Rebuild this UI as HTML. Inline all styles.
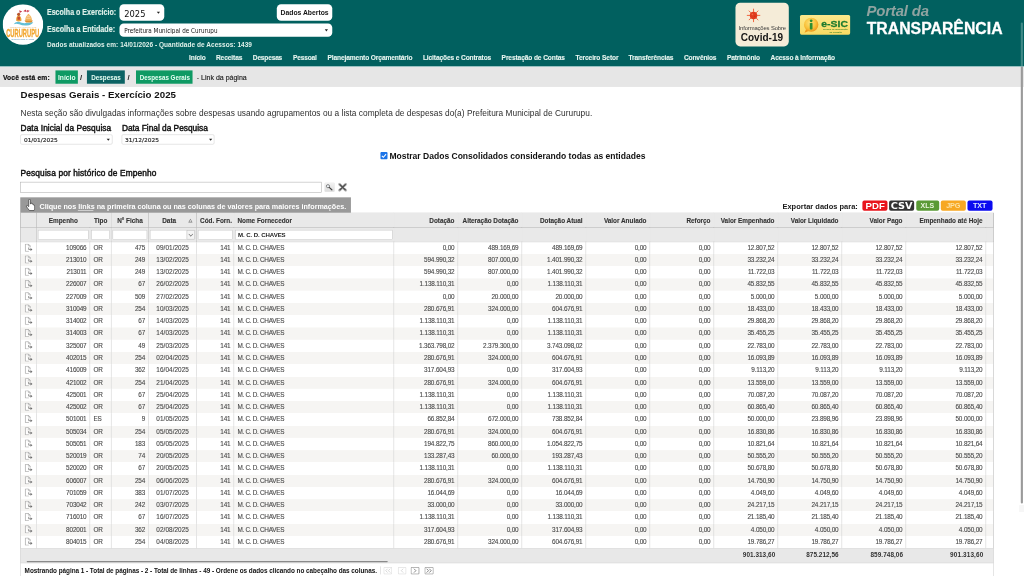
<!DOCTYPE html>
<html lang="pt-BR"><head><meta charset="utf-8"><title>Portal da Transparência - Despesas Gerais</title>
<style>
html,body{margin:0;padding:0;background:#fff;overflow:hidden;width:1024px;height:576px}
#w{position:absolute;left:0;top:0;width:1920px;height:1080px;transform:scale(.5333333);filter:contrast(1);transform-origin:0 0;background:#fff;overflow:hidden;font-family:"Liberation Sans",sans-serif}
.b{position:absolute;display:block}
.t{position:absolute;white-space:pre;line-height:1}
.arr{width:0;height:0;border-style:solid;border-color:#222 transparent transparent transparent}
table.g{position:absolute;border-collapse:collapse;table-layout:fixed;font:12px/1 "Liberation Sans",sans-serif;color:#484848;border:1px solid #cfcfcf;border-bottom:0}
table.g td,table.g th{padding:0 6px;overflow:hidden;white-space:nowrap;border-left:1px solid #cdcdcd;border-right:1px solid #cdcdcd;box-sizing:border-box}
table.g tr.h th{height:27px;background:#e9e9e9;color:#333;font-weight:700;font-size:12px;border-bottom:1px solid #b4b4b4;border-left-color:#b0b0b0;border-right-color:#b0b0b0;position:relative;letter-spacing:-0.03px;-webkit-text-stroke:0.2px #333;padding-top:2px}
table.g tr.f td{height:27px;background:#e9e9e9;border-bottom:1px solid #bdbdbd;padding:0 2px;position:relative;border-left-color:#bdbdbd;border-right-color:#bdbdbd}
table.g tr.f u{display:block;height:19px;margin-top:1px;background:#fff;border:1px solid #c4c4c4;box-sizing:border-box;text-decoration:none}
table.g tr.f u.dd{margin-right:0}
table.g tr.f b.ddb{position:absolute;right:3px;top:5px;width:15px;height:17px;border:1px solid #bdbdbd;background:#f4f4f4;box-sizing:border-box}
table.g tr.f b.ddb:after{content:"";position:absolute;left:3.5px;top:3.5px;width:4.5px;height:4.5px;border-right:1.3px solid #666;border-bottom:1.3px solid #666;transform:rotate(45deg)}
table.g tr.f u.fn{font-weight:700;color:#222;font-size:11.4px;line-height:17px;padding-left:4px;letter-spacing:-0.15px}
table.g tr.d td{height:23px;line-height:23px;letter-spacing:-0.3px;-webkit-text-stroke:0.2px #484848}
table.g tr.a td{background:#f6f5f3}
table.g tr.d1 td{height:22.5px;line-height:22.5px}
table.g tr.ft td{height:28px;background:#e8e8e8;font-weight:700;color:#333;border-left-color:#e8e8e8;border-right-color:#e8e8e8;border-top:1px solid #d4d4d4;vertical-align:top;padding-top:5px}
table.g tr.d td.dt{letter-spacing:.12px}
table.g tr.d td.nm{letter-spacing:-.55px}
table.g .r{text-align:right}.g .l{text-align:left}.g .c{text-align:center}
table.g td.i{padding:0;text-align:center;line-height:0}
table.g td.i svg{vertical-align:middle;position:relative;top:-1px;left:.6px}
i.srt{position:absolute;right:7px;top:10px;width:0;height:0;border-style:solid;border-width:0 4px 7px 4px;border-color:transparent transparent #777 transparent}
i.srt:after{content:"";position:absolute;left:-2.4px;top:2.2px;border-style:solid;border-width:0 2.4px 4.2px 2.4px;border-color:transparent transparent #e9e9e9 transparent}
.pg{border:1px solid;box-sizing:border-box;border-radius:2px;font:700 15px/11px "Liberation Sans",sans-serif;text-align:center;background:#fff}
</style></head><body><div id="w">
<div class="b" style="left:0.00px;top:0.00px;width:1920.00px;height:124.50px;background:#01605f;"></div>
<div class="b" style="left:0.00px;top:124.50px;width:1920.00px;height:38.62px;background:#e6e6e6;"></div>
<div class="b" style="left:0.00px;top:124.50px;width:1920.00px;height:1.88px;background:linear-gradient(#bfe6e4,#e6e6e6);"></div>
<div class="b" style="left:224.06px;top:8.06px;width:84.38px;height:30.56px;background:#fff;border-radius:8px;"></div>
<div class="b arr" style="left:293.62px;top:21.75px;border-width:4px 3.2px 0 3.2px;"></div>
<div class="b" style="left:224.06px;top:44.44px;width:398.81px;height:24.56px;background:#fff;border-radius:8px;"></div>
<div class="b arr" style="left:609.38px;top:55.12px;border-width:4px 3.2px 0 3.2px;"></div>
<div class="b" style="left:519.19px;top:7.69px;width:103.69px;height:31.50px;background:#fff;border-radius:8px;"></div>
<div class="b" style="left:1378.50px;top:5.25px;width:100.87px;height:81.75px;background:#f5ecd8;border-radius:9px;"></div>
<svg class="b" style="left:1398.75px;top:15.00px" width="27.75" height="27.75" viewBox="-17 -17 34 34">
<g stroke="#f0603a" stroke-width="2.2" stroke-linecap="round">
<line x1="0" y1="-9" x2="0" y2="-14.5"/><line x1="0" y1="9" x2="0" y2="14.5"/><line x1="-9" y1="0" x2="-14.5" y2="0"/><line x1="9" y1="0" x2="14.5" y2="0"/>
<line x1="6.4" y1="6.4" x2="10.2" y2="10.2"/><line x1="-6.4" y1="6.4" x2="-10.2" y2="10.2"/><line x1="6.4" y1="-6.4" x2="10.2" y2="-10.2"/><line x1="-6.4" y1="-6.4" x2="-10.2" y2="-10.2"/>
</g><circle r="8.6" fill="#e03a1e"/><circle cx="-2.5" cy="-2.5" r="2" fill="#ee6a44"/><circle cx="3" cy="2" r="1.6" fill="#c92c14"/></svg>
<div class="b" style="left:1500.19px;top:28.12px;width:93.37px;height:37.31px;background:linear-gradient(#fce88c,#f9da62);border-radius:3px;"></div>
<svg class="b" style="left:1504.69px;top:30.56px" width="31.88" height="32.62" viewBox="0 0 34 35">
<defs><radialGradient id="eg" cx=".42" cy=".38" r=".62"><stop offset="0" stop-color="#fde27a"/><stop offset=".62" stop-color="#f9c33c"/><stop offset="1" stop-color="#ee9a1c"/></radialGradient></defs>
<path d="M7 25 L3.500 32.500 L13 28.500Z" fill="#ee9a1c"/><ellipse cx="17" cy="16.500" rx="14.500" ry="14.200" fill="url(#eg)"/>
<circle cx="17" cy="8.600" r="2.800" fill="#2c8f33"/><rect x="14.300" y="12.800" width="5.400" height="13.400" rx="1.400" fill="#2c8f33"/></svg>
<svg class="b" style="left:4.69px;top:8.44px" width="76.12" height="76.12" viewBox="0 0 81 81">
<circle cx="40.5" cy="40.5" r="40.5" fill="#fff"/>
<path d="M22 40 q3 -6 10 -5 q9 4 17 2 q7 -2 12 -1 q-3 6 -13 6.5 q-9 .5 -15 -2.5 q-6 -2 -11 0z" fill="#63bfd6"/>
<path d="M27 33 q-1 -8 5 -12 q6 4 5.5 12 q-5 3 -10.5 0z" fill="#e9a23b"/><circle cx="32" cy="20" r="3.2" fill="#b8562c"/>
<path d="M29.500 25 h5 v6 h-5z" fill="#c9472d"/>
<path d="M45 33 q0 -9 6.500 -14 q7 5 7 14z" fill="#f2b155"/><path d="M43.500 32.500 h17 l-3 4 h-11z" fill="#de8f2f"/>
<path d="M47 27 h9 v1.500 h-9z M48 23 h7 v1.200 h-7z" fill="#fff" opacity=".7"/>
<path d="M33 12 l6 2.500 l-5 3z M41 14 l5 -3.500 l2 5z M48 11.500 l6 1.500 l-4.500 3.500z" fill="#c93a4a"/>
<text x="7" y="65" font-family="Liberation Sans, sans-serif" font-weight="700" font-size="23.5" fill="#f2a62e" textLength="66" lengthAdjust="spacingAndGlyphs" stroke="#f2a62e" stroke-width=".6">CURURUPU</text>
<text x="14" y="47.300" font-family="Liberation Sans, sans-serif" font-size="3.400" fill="#e2b57a" textLength="53" lengthAdjust="spacingAndGlyphs">PREFEITURA MUNICIPAL DE</text>
<text x="17" y="71.500" font-family="Liberation Serif, serif" font-style="italic" font-size="5.200" fill="#5c93b8" textLength="46" lengthAdjust="spacingAndGlyphs">reconstruindo a cidade</text>
</svg>
<div class="b" style="left:103.50px;top:131.81px;width:42.37px;height:25.31px;background:#0f9a64;"></div>
<div class="b" style="left:163.12px;top:131.81px;width:70.88px;height:25.31px;background:#0c6364;"></div>
<div class="b" style="left:255.00px;top:131.81px;width:105.56px;height:25.31px;background:#0f9a64;"></div>
<div class="b" style="left:38.25px;top:251.62px;width:172.69px;height:19.88px;background:#fff;border:1px solid #d0d0d0;border-radius:3px;box-sizing:border-box;"></div>
<div class="b" style="left:228.00px;top:251.62px;width:174.19px;height:19.88px;background:#fff;border:1px solid #d0d0d0;border-radius:3px;box-sizing:border-box;"></div>
<div class="b arr" style="left:200.44px;top:260.44px;border-width:4.4px 3.6px 0 3.6px;"></div>
<div class="b arr" style="left:391.50px;top:260.44px;border-width:4.4px 3.6px 0 3.6px;"></div>
<svg class="b" style="left:712.88px;top:285.38px" width="13.88" height="13.88" viewBox="0 0 14 14"><rect width="14" height="14" rx="2.2" fill="#1a73e8"/><path d="M3 7.2 L5.8 10 L11 4.2" stroke="#fff" stroke-width="2" fill="none"/></svg>
<div class="b" style="left:38.25px;top:341.25px;width:564.75px;height:19.69px;background:#fff;border:1.5px solid #adadad;box-sizing:border-box;"></div>
<svg class="b" style="left:607.88px;top:342.19px" width="19.69" height="18.00" viewBox="0 0 21 19.2"><defs><linearGradient id="sg" x1="0" y1="0" x2="0" y2="1"><stop offset="0" stop-color="#f3f3f3"/><stop offset="1" stop-color="#dcdcdc"/></linearGradient></defs><rect x="0.3" y="0.3" width="20.400" height="18.600" rx="2.500" fill="url(#sg)" stroke="#e2e2e2" stroke-width=".6"/><circle cx="7.400" cy="7.600" r="3.200" fill="#eef3f7" stroke="#666" stroke-width="1.500"/><path d="M9.800 10 L15.200 14.800" stroke="#444" stroke-width="2.400" stroke-linecap="round"/></svg>
<svg class="b" style="left:633.38px;top:342.19px" width="18.75" height="18.00" viewBox="0 0 20 19.2"><path d="M3.800 3.600 L16.200 15.800 M16.200 3.600 L3.800 15.800" stroke="#b9b9b9" stroke-width="5.400" stroke-linecap="round"/><path d="M3.800 3.600 L16.200 15.800 M16.200 3.600 L3.800 15.800" stroke="#505050" stroke-width="2.600"/></svg>
<div class="b" style="left:37.50px;top:370.12px;width:620.62px;height:29.44px;background:#999;"></div>
<svg class="b" style="left:48.00px;top:373.12px" width="17.62" height="22.50" viewBox="0 0 18 23"><path d="M6 2.2 q0 -1.6 1.6 -1.6 q1.6 0 1.6 1.6 v7.2 l1 .1 v-1.4 q2.6 -.6 2.6 1.2 v.6 q2.4 -.4 2.4 1.4 v.5 q2.2 -.2 2.2 1.8 v4.2 q0 2.5 -1.4 4.4 h-8.6 q-2.6 -3.2 -5.6 -7.2 q-1.2 -2 1 -2.4 q1.4 0 3.2 2.2z" fill="#fff" stroke="#333" stroke-width="1.3"/></svg>
<div class="b" style="left:146.06px;top:393.75px;width:29.44px;height:1.12px;background:#fff;"></div>
<div class="b" style="left:1617.00px;top:375.56px;width:47.25px;height:19.69px;background:#e8151d;border-radius:3.5px;"></div>
<div class="b" style="left:1667.06px;top:375.56px;width:47.25px;height:19.69px;background:#333;border-radius:3.5px;"></div>
<div class="b" style="left:1717.50px;top:375.56px;width:43.50px;height:19.69px;background:#5a9a36;border-radius:3.5px;"></div>
<div class="b" style="left:1763.81px;top:375.56px;width:47.25px;height:19.69px;background:#f7a823;border-radius:3.5px;"></div>
<div class="b" style="left:1813.88px;top:375.56px;width:47.25px;height:19.69px;background:#0b0bf0;border-radius:3.5px;"></div>
<div class="b" style="left:38.01px;top:399.00px;width:1824.99px;height:54.00px;background:#e9e9e9;"></div>
<div class="b" style="left:38.01px;top:1027.88px;width:1824.99px;height:28.50px;background:#e8e8e8;border-top:1px solid #d6d6d6;border-bottom:1px solid #d9d9d9;box-sizing:border-box;"></div>
<div class="b" style="left:38.01px;top:399.00px;width:0.99px;height:681.00px;background:#cfcfcf;"></div>
<div class="b" style="left:1862.06px;top:399.00px;width:0.99px;height:681.00px;background:#cfcfcf;"></div>
<table class="g" style="left:38.2px;top:398.5px;width:1824.2px"><colgroup><col style="width:30.0px"><col style="width:99.99999999999999px"><col style="width:40.0px"><col style="width:70.0px"><col style="width:90.0px"><col style="width:70.0px"><col style="width:300.00000000000006px"><col style="width:120.0px"><col style="width:120.0px"><col style="width:120.0px"><col style="width:120.0px"><col style="width:120.0px"><col style="width:120.0px"><col style="width:120.0px"><col style="width:120.0px"><col style="width:150.0px"><col style="width:14.200000000000045px"></colgroup>
<tr class="h"><th class="c"></th><th class="c">Empenho</th><th class="c">Tipo</th><th class="c">N° Ficha</th><th class="c" style="padding-right:19px">Data<i class="srt"></i></th><th class="c">Cód. Forn.</th><th class="l">Nome Fornecedor</th><th class="r">Dotação</th><th class="r">Alteração Dotação</th><th class="r">Dotação Atual</th><th class="r">Valor Anulado</th><th class="r">Reforço</th><th class="r">Valor Empenhado</th><th class="r">Valor Liquidado</th><th class="r">Valor Pago</th><th class="r">Empenhado até Hoje</th><th class="c"></th></tr>
<tr class="f"><td></td><td><u></u></td><td><u></u></td><td><u></u></td><td><u class="dd"></u><b class="ddb"></b></td><td><u></u></td><td><u class="fn">M. C. D. CHAVES</u></td><td></td><td></td><td></td><td></td><td></td><td></td><td></td><td></td><td></td><td></td></tr>
<tr class="d d1"><td class="i"><svg width="16" height="15" viewBox="0 0 16 15"><path d="M1.600 .6 h5.600 l3.400 3.400 v2.800 M1.600 .6 v13.800 h6.600" fill="#fff" stroke="#8a8a8a" stroke-width="1.100"/><path d="M7.200 .6 v3.400 h3.400" fill="none" stroke="#9a9a9a" stroke-width="1"/><path d="M7.800 7 v3.800 h4" fill="none" stroke="#6a6a6a" stroke-width="1.300"/><path d="M11.200 7.900 l3.600 2.900 l-3.600 2.900z" fill="#6a6a6a"/></svg></td><td class="r">109066</td><td class="l">OR</td><td class="r">475</td><td class="c dt">09/01/2025</td><td class="r">141</td><td class="l nm">M. C. D. CHAVES</td><td class="r">0,00</td><td class="r">489.169,69</td><td class="r">489.169,69</td><td class="r">0,00</td><td class="r">0,00</td><td class="r">12.807,52</td><td class="r">12.807,52</td><td class="r">12.807,52</td><td class="r">12.807,52</td><td class=""></td></tr>
<tr class="d a"><td class="i"><svg width="16" height="15" viewBox="0 0 16 15"><path d="M1.600 .6 h5.600 l3.400 3.400 v2.800 M1.600 .6 v13.800 h6.600" fill="#fff" stroke="#8a8a8a" stroke-width="1.100"/><path d="M7.200 .6 v3.400 h3.400" fill="none" stroke="#9a9a9a" stroke-width="1"/><path d="M7.800 7 v3.800 h4" fill="none" stroke="#6a6a6a" stroke-width="1.300"/><path d="M11.200 7.900 l3.600 2.900 l-3.600 2.900z" fill="#6a6a6a"/></svg></td><td class="r">213010</td><td class="l">OR</td><td class="r">249</td><td class="c dt">13/02/2025</td><td class="r">141</td><td class="l nm">M. C. D. CHAVES</td><td class="r">594.990,32</td><td class="r">807.000,00</td><td class="r">1.401.990,32</td><td class="r">0,00</td><td class="r">0,00</td><td class="r">33.232,24</td><td class="r">33.232,24</td><td class="r">33.232,24</td><td class="r">33.232,24</td><td class=""></td></tr>
<tr class="d"><td class="i"><svg width="16" height="15" viewBox="0 0 16 15"><path d="M1.600 .6 h5.600 l3.400 3.400 v2.800 M1.600 .6 v13.800 h6.600" fill="#fff" stroke="#8a8a8a" stroke-width="1.100"/><path d="M7.200 .6 v3.400 h3.400" fill="none" stroke="#9a9a9a" stroke-width="1"/><path d="M7.800 7 v3.800 h4" fill="none" stroke="#6a6a6a" stroke-width="1.300"/><path d="M11.200 7.900 l3.600 2.900 l-3.600 2.900z" fill="#6a6a6a"/></svg></td><td class="r">213011</td><td class="l">OR</td><td class="r">249</td><td class="c dt">13/02/2025</td><td class="r">141</td><td class="l nm">M. C. D. CHAVES</td><td class="r">594.990,32</td><td class="r">807.000,00</td><td class="r">1.401.990,32</td><td class="r">0,00</td><td class="r">0,00</td><td class="r">11.722,03</td><td class="r">11.722,03</td><td class="r">11.722,03</td><td class="r">11.722,03</td><td class=""></td></tr>
<tr class="d a"><td class="i"><svg width="16" height="15" viewBox="0 0 16 15"><path d="M1.600 .6 h5.600 l3.400 3.400 v2.800 M1.600 .6 v13.800 h6.600" fill="#fff" stroke="#8a8a8a" stroke-width="1.100"/><path d="M7.200 .6 v3.400 h3.400" fill="none" stroke="#9a9a9a" stroke-width="1"/><path d="M7.800 7 v3.800 h4" fill="none" stroke="#6a6a6a" stroke-width="1.300"/><path d="M11.200 7.900 l3.600 2.900 l-3.600 2.900z" fill="#6a6a6a"/></svg></td><td class="r">226007</td><td class="l">OR</td><td class="r">67</td><td class="c dt">26/02/2025</td><td class="r">141</td><td class="l nm">M. C. D. CHAVES</td><td class="r">1.138.110,31</td><td class="r">0,00</td><td class="r">1.138.110,31</td><td class="r">0,00</td><td class="r">0,00</td><td class="r">45.832,55</td><td class="r">45.832,55</td><td class="r">45.832,55</td><td class="r">45.832,55</td><td class=""></td></tr>
<tr class="d"><td class="i"><svg width="16" height="15" viewBox="0 0 16 15"><path d="M1.600 .6 h5.600 l3.400 3.400 v2.800 M1.600 .6 v13.800 h6.600" fill="#fff" stroke="#8a8a8a" stroke-width="1.100"/><path d="M7.200 .6 v3.400 h3.400" fill="none" stroke="#9a9a9a" stroke-width="1"/><path d="M7.800 7 v3.800 h4" fill="none" stroke="#6a6a6a" stroke-width="1.300"/><path d="M11.200 7.900 l3.600 2.900 l-3.600 2.900z" fill="#6a6a6a"/></svg></td><td class="r">227009</td><td class="l">OR</td><td class="r">509</td><td class="c dt">27/02/2025</td><td class="r">141</td><td class="l nm">M. C. D. CHAVES</td><td class="r">0,00</td><td class="r">20.000,00</td><td class="r">20.000,00</td><td class="r">0,00</td><td class="r">0,00</td><td class="r">5.000,00</td><td class="r">5.000,00</td><td class="r">5.000,00</td><td class="r">5.000,00</td><td class=""></td></tr>
<tr class="d a"><td class="i"><svg width="16" height="15" viewBox="0 0 16 15"><path d="M1.600 .6 h5.600 l3.400 3.400 v2.800 M1.600 .6 v13.800 h6.600" fill="#fff" stroke="#8a8a8a" stroke-width="1.100"/><path d="M7.200 .6 v3.400 h3.400" fill="none" stroke="#9a9a9a" stroke-width="1"/><path d="M7.800 7 v3.800 h4" fill="none" stroke="#6a6a6a" stroke-width="1.300"/><path d="M11.200 7.900 l3.600 2.900 l-3.600 2.900z" fill="#6a6a6a"/></svg></td><td class="r">310049</td><td class="l">OR</td><td class="r">254</td><td class="c dt">10/03/2025</td><td class="r">141</td><td class="l nm">M. C. D. CHAVES</td><td class="r">280.676,91</td><td class="r">324.000,00</td><td class="r">604.676,91</td><td class="r">0,00</td><td class="r">0,00</td><td class="r">18.433,00</td><td class="r">18.433,00</td><td class="r">18.433,00</td><td class="r">18.433,00</td><td class=""></td></tr>
<tr class="d"><td class="i"><svg width="16" height="15" viewBox="0 0 16 15"><path d="M1.600 .6 h5.600 l3.400 3.400 v2.800 M1.600 .6 v13.800 h6.600" fill="#fff" stroke="#8a8a8a" stroke-width="1.100"/><path d="M7.200 .6 v3.400 h3.400" fill="none" stroke="#9a9a9a" stroke-width="1"/><path d="M7.800 7 v3.800 h4" fill="none" stroke="#6a6a6a" stroke-width="1.300"/><path d="M11.200 7.900 l3.600 2.900 l-3.600 2.900z" fill="#6a6a6a"/></svg></td><td class="r">314002</td><td class="l">OR</td><td class="r">67</td><td class="c dt">14/03/2025</td><td class="r">141</td><td class="l nm">M. C. D. CHAVES</td><td class="r">1.138.110,31</td><td class="r">0,00</td><td class="r">1.138.110,31</td><td class="r">0,00</td><td class="r">0,00</td><td class="r">29.868,20</td><td class="r">29.868,20</td><td class="r">29.868,20</td><td class="r">29.868,20</td><td class=""></td></tr>
<tr class="d a"><td class="i"><svg width="16" height="15" viewBox="0 0 16 15"><path d="M1.600 .6 h5.600 l3.400 3.400 v2.800 M1.600 .6 v13.800 h6.600" fill="#fff" stroke="#8a8a8a" stroke-width="1.100"/><path d="M7.200 .6 v3.400 h3.400" fill="none" stroke="#9a9a9a" stroke-width="1"/><path d="M7.800 7 v3.800 h4" fill="none" stroke="#6a6a6a" stroke-width="1.300"/><path d="M11.200 7.900 l3.600 2.900 l-3.600 2.900z" fill="#6a6a6a"/></svg></td><td class="r">314003</td><td class="l">OR</td><td class="r">67</td><td class="c dt">14/03/2025</td><td class="r">141</td><td class="l nm">M. C. D. CHAVES</td><td class="r">1.138.110,31</td><td class="r">0,00</td><td class="r">1.138.110,31</td><td class="r">0,00</td><td class="r">0,00</td><td class="r">35.455,25</td><td class="r">35.455,25</td><td class="r">35.455,25</td><td class="r">35.455,25</td><td class=""></td></tr>
<tr class="d"><td class="i"><svg width="16" height="15" viewBox="0 0 16 15"><path d="M1.600 .6 h5.600 l3.400 3.400 v2.800 M1.600 .6 v13.800 h6.600" fill="#fff" stroke="#8a8a8a" stroke-width="1.100"/><path d="M7.200 .6 v3.400 h3.400" fill="none" stroke="#9a9a9a" stroke-width="1"/><path d="M7.800 7 v3.800 h4" fill="none" stroke="#6a6a6a" stroke-width="1.300"/><path d="M11.200 7.900 l3.600 2.900 l-3.600 2.900z" fill="#6a6a6a"/></svg></td><td class="r">325007</td><td class="l">OR</td><td class="r">49</td><td class="c dt">25/03/2025</td><td class="r">141</td><td class="l nm">M. C. D. CHAVES</td><td class="r">1.363.798,02</td><td class="r">2.379.300,00</td><td class="r">3.743.098,02</td><td class="r">0,00</td><td class="r">0,00</td><td class="r">22.783,00</td><td class="r">22.783,00</td><td class="r">22.783,00</td><td class="r">22.783,00</td><td class=""></td></tr>
<tr class="d a"><td class="i"><svg width="16" height="15" viewBox="0 0 16 15"><path d="M1.600 .6 h5.600 l3.400 3.400 v2.800 M1.600 .6 v13.800 h6.600" fill="#fff" stroke="#8a8a8a" stroke-width="1.100"/><path d="M7.200 .6 v3.400 h3.400" fill="none" stroke="#9a9a9a" stroke-width="1"/><path d="M7.800 7 v3.800 h4" fill="none" stroke="#6a6a6a" stroke-width="1.300"/><path d="M11.200 7.900 l3.600 2.900 l-3.600 2.900z" fill="#6a6a6a"/></svg></td><td class="r">402015</td><td class="l">OR</td><td class="r">254</td><td class="c dt">02/04/2025</td><td class="r">141</td><td class="l nm">M. C. D. CHAVES</td><td class="r">280.676,91</td><td class="r">324.000,00</td><td class="r">604.676,91</td><td class="r">0,00</td><td class="r">0,00</td><td class="r">16.093,89</td><td class="r">16.093,89</td><td class="r">16.093,89</td><td class="r">16.093,89</td><td class=""></td></tr>
<tr class="d"><td class="i"><svg width="16" height="15" viewBox="0 0 16 15"><path d="M1.600 .6 h5.600 l3.400 3.400 v2.800 M1.600 .6 v13.800 h6.600" fill="#fff" stroke="#8a8a8a" stroke-width="1.100"/><path d="M7.200 .6 v3.400 h3.400" fill="none" stroke="#9a9a9a" stroke-width="1"/><path d="M7.800 7 v3.800 h4" fill="none" stroke="#6a6a6a" stroke-width="1.300"/><path d="M11.200 7.900 l3.600 2.900 l-3.600 2.900z" fill="#6a6a6a"/></svg></td><td class="r">416009</td><td class="l">OR</td><td class="r">362</td><td class="c dt">16/04/2025</td><td class="r">141</td><td class="l nm">M. C. D. CHAVES</td><td class="r">317.604,93</td><td class="r">0,00</td><td class="r">317.604,93</td><td class="r">0,00</td><td class="r">0,00</td><td class="r">9.113,20</td><td class="r">9.113,20</td><td class="r">9.113,20</td><td class="r">9.113,20</td><td class=""></td></tr>
<tr class="d a"><td class="i"><svg width="16" height="15" viewBox="0 0 16 15"><path d="M1.600 .6 h5.600 l3.400 3.400 v2.800 M1.600 .6 v13.800 h6.600" fill="#fff" stroke="#8a8a8a" stroke-width="1.100"/><path d="M7.200 .6 v3.400 h3.400" fill="none" stroke="#9a9a9a" stroke-width="1"/><path d="M7.800 7 v3.800 h4" fill="none" stroke="#6a6a6a" stroke-width="1.300"/><path d="M11.200 7.900 l3.600 2.900 l-3.600 2.900z" fill="#6a6a6a"/></svg></td><td class="r">421002</td><td class="l">OR</td><td class="r">254</td><td class="c dt">21/04/2025</td><td class="r">141</td><td class="l nm">M. C. D. CHAVES</td><td class="r">280.676,91</td><td class="r">324.000,00</td><td class="r">604.676,91</td><td class="r">0,00</td><td class="r">0,00</td><td class="r">13.559,00</td><td class="r">13.559,00</td><td class="r">13.559,00</td><td class="r">13.559,00</td><td class=""></td></tr>
<tr class="d"><td class="i"><svg width="16" height="15" viewBox="0 0 16 15"><path d="M1.600 .6 h5.600 l3.400 3.400 v2.800 M1.600 .6 v13.800 h6.600" fill="#fff" stroke="#8a8a8a" stroke-width="1.100"/><path d="M7.200 .6 v3.400 h3.400" fill="none" stroke="#9a9a9a" stroke-width="1"/><path d="M7.800 7 v3.800 h4" fill="none" stroke="#6a6a6a" stroke-width="1.300"/><path d="M11.200 7.900 l3.600 2.900 l-3.600 2.900z" fill="#6a6a6a"/></svg></td><td class="r">425001</td><td class="l">OR</td><td class="r">67</td><td class="c dt">25/04/2025</td><td class="r">141</td><td class="l nm">M. C. D. CHAVES</td><td class="r">1.138.110,31</td><td class="r">0,00</td><td class="r">1.138.110,31</td><td class="r">0,00</td><td class="r">0,00</td><td class="r">70.087,20</td><td class="r">70.087,20</td><td class="r">70.087,20</td><td class="r">70.087,20</td><td class=""></td></tr>
<tr class="d a"><td class="i"><svg width="16" height="15" viewBox="0 0 16 15"><path d="M1.600 .6 h5.600 l3.400 3.400 v2.800 M1.600 .6 v13.800 h6.600" fill="#fff" stroke="#8a8a8a" stroke-width="1.100"/><path d="M7.200 .6 v3.400 h3.400" fill="none" stroke="#9a9a9a" stroke-width="1"/><path d="M7.800 7 v3.800 h4" fill="none" stroke="#6a6a6a" stroke-width="1.300"/><path d="M11.200 7.900 l3.600 2.900 l-3.600 2.900z" fill="#6a6a6a"/></svg></td><td class="r">425002</td><td class="l">OR</td><td class="r">67</td><td class="c dt">25/04/2025</td><td class="r">141</td><td class="l nm">M. C. D. CHAVES</td><td class="r">1.138.110,31</td><td class="r">0,00</td><td class="r">1.138.110,31</td><td class="r">0,00</td><td class="r">0,00</td><td class="r">60.865,40</td><td class="r">60.865,40</td><td class="r">60.865,40</td><td class="r">60.865,40</td><td class=""></td></tr>
<tr class="d"><td class="i"><svg width="16" height="15" viewBox="0 0 16 15"><path d="M1.600 .6 h5.600 l3.400 3.400 v2.800 M1.600 .6 v13.800 h6.600" fill="#fff" stroke="#8a8a8a" stroke-width="1.100"/><path d="M7.200 .6 v3.400 h3.400" fill="none" stroke="#9a9a9a" stroke-width="1"/><path d="M7.800 7 v3.800 h4" fill="none" stroke="#6a6a6a" stroke-width="1.300"/><path d="M11.200 7.900 l3.600 2.900 l-3.600 2.900z" fill="#6a6a6a"/></svg></td><td class="r">501001</td><td class="l">ES</td><td class="r">9</td><td class="c dt">01/05/2025</td><td class="r">141</td><td class="l nm">M. C. D. CHAVES</td><td class="r">66.852,84</td><td class="r">672.000,00</td><td class="r">738.852,84</td><td class="r">0,00</td><td class="r">0,00</td><td class="r">50.000,00</td><td class="r">23.898,96</td><td class="r">23.898,96</td><td class="r">50.000,00</td><td class=""></td></tr>
<tr class="d a"><td class="i"><svg width="16" height="15" viewBox="0 0 16 15"><path d="M1.600 .6 h5.600 l3.400 3.400 v2.800 M1.600 .6 v13.800 h6.600" fill="#fff" stroke="#8a8a8a" stroke-width="1.100"/><path d="M7.200 .6 v3.400 h3.400" fill="none" stroke="#9a9a9a" stroke-width="1"/><path d="M7.800 7 v3.800 h4" fill="none" stroke="#6a6a6a" stroke-width="1.300"/><path d="M11.200 7.900 l3.600 2.900 l-3.600 2.900z" fill="#6a6a6a"/></svg></td><td class="r">505034</td><td class="l">OR</td><td class="r">254</td><td class="c dt">05/05/2025</td><td class="r">141</td><td class="l nm">M. C. D. CHAVES</td><td class="r">280.676,91</td><td class="r">324.000,00</td><td class="r">604.676,91</td><td class="r">0,00</td><td class="r">0,00</td><td class="r">16.830,86</td><td class="r">16.830,86</td><td class="r">16.830,86</td><td class="r">16.830,86</td><td class=""></td></tr>
<tr class="d"><td class="i"><svg width="16" height="15" viewBox="0 0 16 15"><path d="M1.600 .6 h5.600 l3.400 3.400 v2.800 M1.600 .6 v13.800 h6.600" fill="#fff" stroke="#8a8a8a" stroke-width="1.100"/><path d="M7.200 .6 v3.400 h3.400" fill="none" stroke="#9a9a9a" stroke-width="1"/><path d="M7.800 7 v3.800 h4" fill="none" stroke="#6a6a6a" stroke-width="1.300"/><path d="M11.200 7.900 l3.600 2.900 l-3.600 2.900z" fill="#6a6a6a"/></svg></td><td class="r">505051</td><td class="l">OR</td><td class="r">183</td><td class="c dt">05/05/2025</td><td class="r">141</td><td class="l nm">M. C. D. CHAVES</td><td class="r">194.822,75</td><td class="r">860.000,00</td><td class="r">1.054.822,75</td><td class="r">0,00</td><td class="r">0,00</td><td class="r">10.821,64</td><td class="r">10.821,64</td><td class="r">10.821,64</td><td class="r">10.821,64</td><td class=""></td></tr>
<tr class="d a"><td class="i"><svg width="16" height="15" viewBox="0 0 16 15"><path d="M1.600 .6 h5.600 l3.400 3.400 v2.800 M1.600 .6 v13.800 h6.600" fill="#fff" stroke="#8a8a8a" stroke-width="1.100"/><path d="M7.200 .6 v3.400 h3.400" fill="none" stroke="#9a9a9a" stroke-width="1"/><path d="M7.800 7 v3.800 h4" fill="none" stroke="#6a6a6a" stroke-width="1.300"/><path d="M11.200 7.900 l3.600 2.900 l-3.600 2.900z" fill="#6a6a6a"/></svg></td><td class="r">520019</td><td class="l">OR</td><td class="r">74</td><td class="c dt">20/05/2025</td><td class="r">141</td><td class="l nm">M. C. D. CHAVES</td><td class="r">133.287,43</td><td class="r">60.000,00</td><td class="r">193.287,43</td><td class="r">0,00</td><td class="r">0,00</td><td class="r">50.555,20</td><td class="r">50.555,20</td><td class="r">50.555,20</td><td class="r">50.555,20</td><td class=""></td></tr>
<tr class="d"><td class="i"><svg width="16" height="15" viewBox="0 0 16 15"><path d="M1.600 .6 h5.600 l3.400 3.400 v2.800 M1.600 .6 v13.800 h6.600" fill="#fff" stroke="#8a8a8a" stroke-width="1.100"/><path d="M7.200 .6 v3.400 h3.400" fill="none" stroke="#9a9a9a" stroke-width="1"/><path d="M7.800 7 v3.800 h4" fill="none" stroke="#6a6a6a" stroke-width="1.300"/><path d="M11.200 7.900 l3.600 2.900 l-3.600 2.900z" fill="#6a6a6a"/></svg></td><td class="r">520020</td><td class="l">OR</td><td class="r">67</td><td class="c dt">20/05/2025</td><td class="r">141</td><td class="l nm">M. C. D. CHAVES</td><td class="r">1.138.110,31</td><td class="r">0,00</td><td class="r">1.138.110,31</td><td class="r">0,00</td><td class="r">0,00</td><td class="r">50.678,80</td><td class="r">50.678,80</td><td class="r">50.678,80</td><td class="r">50.678,80</td><td class=""></td></tr>
<tr class="d a"><td class="i"><svg width="16" height="15" viewBox="0 0 16 15"><path d="M1.600 .6 h5.600 l3.400 3.400 v2.800 M1.600 .6 v13.800 h6.600" fill="#fff" stroke="#8a8a8a" stroke-width="1.100"/><path d="M7.200 .6 v3.400 h3.400" fill="none" stroke="#9a9a9a" stroke-width="1"/><path d="M7.800 7 v3.800 h4" fill="none" stroke="#6a6a6a" stroke-width="1.300"/><path d="M11.200 7.900 l3.600 2.900 l-3.600 2.900z" fill="#6a6a6a"/></svg></td><td class="r">606007</td><td class="l">OR</td><td class="r">254</td><td class="c dt">06/06/2025</td><td class="r">141</td><td class="l nm">M. C. D. CHAVES</td><td class="r">280.676,91</td><td class="r">324.000,00</td><td class="r">604.676,91</td><td class="r">0,00</td><td class="r">0,00</td><td class="r">14.750,90</td><td class="r">14.750,90</td><td class="r">14.750,90</td><td class="r">14.750,90</td><td class=""></td></tr>
<tr class="d"><td class="i"><svg width="16" height="15" viewBox="0 0 16 15"><path d="M1.600 .6 h5.600 l3.400 3.400 v2.800 M1.600 .6 v13.800 h6.600" fill="#fff" stroke="#8a8a8a" stroke-width="1.100"/><path d="M7.200 .6 v3.400 h3.400" fill="none" stroke="#9a9a9a" stroke-width="1"/><path d="M7.800 7 v3.800 h4" fill="none" stroke="#6a6a6a" stroke-width="1.300"/><path d="M11.200 7.900 l3.600 2.900 l-3.600 2.900z" fill="#6a6a6a"/></svg></td><td class="r">701059</td><td class="l">OR</td><td class="r">383</td><td class="c dt">01/07/2025</td><td class="r">141</td><td class="l nm">M. C. D. CHAVES</td><td class="r">16.044,69</td><td class="r">0,00</td><td class="r">16.044,69</td><td class="r">0,00</td><td class="r">0,00</td><td class="r">4.049,60</td><td class="r">4.049,60</td><td class="r">4.049,60</td><td class="r">4.049,60</td><td class=""></td></tr>
<tr class="d a"><td class="i"><svg width="16" height="15" viewBox="0 0 16 15"><path d="M1.600 .6 h5.600 l3.400 3.400 v2.800 M1.600 .6 v13.800 h6.600" fill="#fff" stroke="#8a8a8a" stroke-width="1.100"/><path d="M7.200 .6 v3.400 h3.400" fill="none" stroke="#9a9a9a" stroke-width="1"/><path d="M7.800 7 v3.800 h4" fill="none" stroke="#6a6a6a" stroke-width="1.300"/><path d="M11.200 7.900 l3.600 2.900 l-3.600 2.900z" fill="#6a6a6a"/></svg></td><td class="r">703042</td><td class="l">OR</td><td class="r">242</td><td class="c dt">03/07/2025</td><td class="r">141</td><td class="l nm">M. C. D. CHAVES</td><td class="r">33.000,00</td><td class="r">0,00</td><td class="r">33.000,00</td><td class="r">0,00</td><td class="r">0,00</td><td class="r">24.217,15</td><td class="r">24.217,15</td><td class="r">24.217,15</td><td class="r">24.217,15</td><td class=""></td></tr>
<tr class="d"><td class="i"><svg width="16" height="15" viewBox="0 0 16 15"><path d="M1.600 .6 h5.600 l3.400 3.400 v2.800 M1.600 .6 v13.800 h6.600" fill="#fff" stroke="#8a8a8a" stroke-width="1.100"/><path d="M7.200 .6 v3.400 h3.400" fill="none" stroke="#9a9a9a" stroke-width="1"/><path d="M7.800 7 v3.800 h4" fill="none" stroke="#6a6a6a" stroke-width="1.300"/><path d="M11.200 7.900 l3.600 2.900 l-3.600 2.900z" fill="#6a6a6a"/></svg></td><td class="r">716010</td><td class="l">OR</td><td class="r">67</td><td class="c dt">16/07/2025</td><td class="r">141</td><td class="l nm">M. C. D. CHAVES</td><td class="r">1.138.110,31</td><td class="r">0,00</td><td class="r">1.138.110,31</td><td class="r">0,00</td><td class="r">0,00</td><td class="r">21.185,40</td><td class="r">21.185,40</td><td class="r">21.185,40</td><td class="r">21.185,40</td><td class=""></td></tr>
<tr class="d a"><td class="i"><svg width="16" height="15" viewBox="0 0 16 15"><path d="M1.600 .6 h5.600 l3.400 3.400 v2.800 M1.600 .6 v13.800 h6.600" fill="#fff" stroke="#8a8a8a" stroke-width="1.100"/><path d="M7.200 .6 v3.400 h3.400" fill="none" stroke="#9a9a9a" stroke-width="1"/><path d="M7.800 7 v3.800 h4" fill="none" stroke="#6a6a6a" stroke-width="1.300"/><path d="M11.200 7.900 l3.600 2.900 l-3.600 2.900z" fill="#6a6a6a"/></svg></td><td class="r">802001</td><td class="l">OR</td><td class="r">362</td><td class="c dt">02/08/2025</td><td class="r">141</td><td class="l nm">M. C. D. CHAVES</td><td class="r">317.604,93</td><td class="r">0,00</td><td class="r">317.604,93</td><td class="r">0,00</td><td class="r">0,00</td><td class="r">4.050,00</td><td class="r">4.050,00</td><td class="r">4.050,00</td><td class="r">4.050,00</td><td class=""></td></tr>
<tr class="d"><td class="i"><svg width="16" height="15" viewBox="0 0 16 15"><path d="M1.600 .6 h5.600 l3.400 3.400 v2.800 M1.600 .6 v13.800 h6.600" fill="#fff" stroke="#8a8a8a" stroke-width="1.100"/><path d="M7.200 .6 v3.400 h3.400" fill="none" stroke="#9a9a9a" stroke-width="1"/><path d="M7.800 7 v3.800 h4" fill="none" stroke="#6a6a6a" stroke-width="1.300"/><path d="M11.200 7.900 l3.600 2.900 l-3.600 2.900z" fill="#6a6a6a"/></svg></td><td class="r">804015</td><td class="l">OR</td><td class="r">254</td><td class="c dt">04/08/2025</td><td class="r">141</td><td class="l nm">M. C. D. CHAVES</td><td class="r">280.676,91</td><td class="r">324.000,00</td><td class="r">604.676,91</td><td class="r">0,00</td><td class="r">0,00</td><td class="r">19.786,27</td><td class="r">19.786,27</td><td class="r">19.786,27</td><td class="r">19.786,27</td><td class=""></td></tr>
</table>
<div class="b" style="left:49.69px;top:1051.69px;width:677.81px;height:2.06px;background:#8a8a8a;border-radius:2px;"></div>
<div class="b" style="left:713.25px;top:1062.38px;width:0.94px;height:15.00px;background:#ccc;"></div>
<svg class="b" style="left:718.69px;top:1062.94px" width="16.31" height="14.06"><rect x=".6" y=".6" width="15.11" height="12.86" rx="1.500" fill="#fff" stroke="#cfcfcf" stroke-width="1.200"/><polyline points="7.8,3.4 4.2,7.0 7.8,10.6" fill="none" stroke="#cfcfcf" stroke-width="1.5"/><polyline points="12.8,3.4 9.2,7.0 12.8,10.6" fill="none" stroke="#cfcfcf" stroke-width="1.5"/></svg>
<svg class="b" style="left:745.69px;top:1062.94px" width="15.94" height="14.06"><rect x=".6" y=".6" width="14.74" height="12.86" rx="1.500" fill="#fff" stroke="#cfcfcf" stroke-width="1.200"/><polyline points="10.0,3.4 6.4,7.0 10.0,10.6" fill="none" stroke="#cfcfcf" stroke-width="1.5"/></svg>
<svg class="b" style="left:770.44px;top:1062.94px" width="16.31" height="14.06"><rect x=".6" y=".6" width="15.11" height="12.86" rx="1.500" fill="#fff" stroke="#6a6a6a" stroke-width="1.200"/><polyline points="6.2,3.4 9.8,7.0 6.2,10.6" fill="none" stroke="#6a6a6a" stroke-width="1.5"/></svg>
<svg class="b" style="left:795.56px;top:1062.94px" width="17.06" height="14.06"><rect x=".6" y=".6" width="15.86" height="12.86" rx="1.500" fill="#fff" stroke="#6a6a6a" stroke-width="1.200"/><polyline points="3.9,3.4 7.5,7.0 3.9,10.6" fill="none" stroke="#6a6a6a" stroke-width="1.5"/><polyline points="8.9,3.4 12.5,7.0 8.9,10.6" fill="none" stroke="#6a6a6a" stroke-width="1.5"/></svg>
<div class="b" style="left:1914.38px;top:41.62px;width:3.56px;height:82.88px;background:#3f8986;border-radius:2px 2px 0 0;"></div>
<div class="b" style="left:1914.38px;top:124.50px;width:3.56px;height:819.19px;background:#9a9a9a;border-radius:0 0 2px 2px;"></div>
<div class="b" style="left:1910.62px;top:946.88px;width:9.38px;height:13.12px;background:#f6f6f6;"></div>
<div class="t" style="left:88.12px;top:16.00px;font:normal 700 15.5px/1 'Liberation Sans', sans-serif;letter-spacing:0.000px;color:#dff0ea;transform:scaleX(0.8557);transform-origin:0 0;-webkit-text-stroke:0.3px #dff0ea;">Escolha o Exercício:</div>
<div class="t" style="left:88.12px;top:47.00px;font:normal 700 15.5px/1 'Liberation Sans', sans-serif;letter-spacing:0.000px;color:#dff0ea;transform:scaleX(0.8681);transform-origin:0 0;-webkit-text-stroke:0.3px #dff0ea;">Escolha a Entidade:</div>
<div class="t" style="left:88.12px;top:78.00px;font:normal 700 12.2px/1 'Liberation Sans', sans-serif;letter-spacing:0.079px;color:#dff0ea;">Dados atualizados em: 14/01/2026 - Quantidade de Acessos: 1439</div>
<div class="t" style="left:232.97px;top:17.00px;font:normal 400 17.5px/1 'DejaVu Sans', 'Liberation Sans', sans-serif;letter-spacing:0.000px;color:#111;transform:scaleX(0.8902);transform-origin:0 0;">2025</div>
<div class="t" style="left:232.97px;top:51.00px;font:normal 400 12px/1 'DejaVu Sans', 'Liberation Sans', sans-serif;letter-spacing:0.000px;color:#111;transform:scaleX(0.8809);transform-origin:0 0;">Prefeitura Municipal de Cururupu</div>
<div class="t" style="left:526.12px;top:17.00px;font:normal 700 14.4px/1 'Liberation Sans', sans-serif;letter-spacing:0.000px;color:#151515;transform:scaleX(0.8857);transform-origin:0 0;">Dados Abertos</div>
<div class="t" style="left:354.38px;top:102.00px;font:normal 700 12.4px/1 'Liberation Sans', sans-serif;letter-spacing:-0.134px;color:#e9f6f1;-webkit-text-stroke:0.2px #e9f6f1;">Início</div>
<div class="t" style="left:404.81px;top:102.00px;font:normal 700 12.4px/1 'Liberation Sans', sans-serif;letter-spacing:-0.158px;color:#e9f6f1;-webkit-text-stroke:0.2px #e9f6f1;">Receitas</div>
<div class="t" style="left:474.00px;top:102.00px;font:normal 700 12.4px/1 'Liberation Sans', sans-serif;letter-spacing:-0.366px;color:#e9f6f1;-webkit-text-stroke:0.2px #e9f6f1;">Despesas</div>
<div class="t" style="left:549.38px;top:102.00px;font:normal 700 12.4px/1 'Liberation Sans', sans-serif;letter-spacing:-0.339px;color:#e9f6f1;-webkit-text-stroke:0.2px #e9f6f1;">Pessoal</div>
<div class="t" style="left:614.06px;top:102.00px;font:normal 700 12.4px/1 'Liberation Sans', sans-serif;letter-spacing:-0.209px;color:#e9f6f1;-webkit-text-stroke:0.2px #e9f6f1;">Planejamento Orçamentário</div>
<div class="t" style="left:792.94px;top:102.00px;font:normal 700 12.4px/1 'Liberation Sans', sans-serif;letter-spacing:-0.222px;color:#e9f6f1;-webkit-text-stroke:0.2px #e9f6f1;">Licitações e Contratos</div>
<div class="t" style="left:940.50px;top:102.00px;font:normal 700 12.4px/1 'Liberation Sans', sans-serif;letter-spacing:-0.206px;color:#e9f6f1;-webkit-text-stroke:0.2px #e9f6f1;">Prestação de Contas</div>
<div class="t" style="left:1079.06px;top:102.00px;font:normal 700 12.4px/1 'Liberation Sans', sans-serif;letter-spacing:-0.190px;color:#e9f6f1;-webkit-text-stroke:0.2px #e9f6f1;">Terceiro Setor</div>
<div class="t" style="left:1178.44px;top:102.00px;font:normal 700 12.4px/1 'Liberation Sans', sans-serif;letter-spacing:-0.239px;color:#e9f6f1;-webkit-text-stroke:0.2px #e9f6f1;">Transferências</div>
<div class="t" style="left:1282.50px;top:102.00px;font:normal 700 12.4px/1 'Liberation Sans', sans-serif;letter-spacing:-0.301px;color:#e9f6f1;-webkit-text-stroke:0.2px #e9f6f1;">Convênios</div>
<div class="t" style="left:1363.12px;top:102.00px;font:normal 700 12.4px/1 'Liberation Sans', sans-serif;letter-spacing:-0.316px;color:#e9f6f1;-webkit-text-stroke:0.2px #e9f6f1;">Patrimônio</div>
<div class="t" style="left:1444.69px;top:102.00px;font:normal 700 12.4px/1 'Liberation Sans', sans-serif;letter-spacing:-0.207px;color:#e9f6f1;-webkit-text-stroke:0.2px #e9f6f1;">Acesso à Informação</div>
<div class="t" style="left:1624.69px;top:7.00px;font:italic 700 28px/1 'Liberation Sans', sans-serif;letter-spacing:-0.328px;color:#8fa3a0;">Portal da</div>
<div class="t" style="left:1624.69px;top:37.00px;font:normal 700 30.6px/1 'Liberation Sans', sans-serif;letter-spacing:0.000px;color:#fff;transform:scaleX(0.9693);transform-origin:0 0;-webkit-text-stroke:0.5px #fff;">TRANSPARÊNCIA</div>
<div class="t" style="left:1384.88px;top:48.00px;font:normal 400 11px/1 'Liberation Sans', sans-serif;letter-spacing:-0.254px;color:#3a3a3a;">Informações Sobre</div>
<div class="t" style="left:1389.38px;top:61.00px;font:normal 700 19.5px/1 'Liberation Sans', sans-serif;letter-spacing:0.000px;color:#151515;transform:scaleX(0.9607);transform-origin:0 0;">Covid-19</div>
<div class="t" style="left:1539.75px;top:35.00px;font:normal 700 18.2px/1 'Liberation Sans', sans-serif;letter-spacing:0.000px;color:#1d7a2e;transform:scaleX(1.0726);transform-origin:0 0;-webkit-text-stroke:0.5px #1d7a2e;">e-SIC</div>
<div class="t" style="left:1543.12px;top:53.00px;font:normal 700 4.6px/1 'Liberation Sans', sans-serif;letter-spacing:-0.148px;color:#4f8a2e;">Serviço de Informação</div>
<div class="t" style="left:1555.31px;top:58.00px;font:normal 700 4.6px/1 'Liberation Sans', sans-serif;letter-spacing:-0.148px;color:#4f8a2e;">ao Cidadão</div>
<div class="t" style="left:5.44px;top:140.00px;font:normal 700 12.6px/1 'Liberation Sans', sans-serif;letter-spacing:0.332px;color:#0a0a0a;-webkit-text-stroke:0.3px #0a0a0a;">Você está em:</div>
<div class="t" style="left:108.56px;top:140.00px;font:normal 700 12.6px/1 'Liberation Sans', sans-serif;letter-spacing:0.022px;color:#e8fff4;">Início</div>
<div class="t" style="left:150.00px;top:138.00px;font:normal 700 14.5px/1 'Liberation Sans', sans-serif;letter-spacing:1.969px;color:#222;">/</div>
<div class="t" style="left:171.38px;top:140.00px;font:normal 700 12.6px/1 'Liberation Sans', sans-serif;letter-spacing:0.000px;color:#e8fff4;transform:scaleX(0.9437);transform-origin:0 0;">Despesas</div>
<div class="t" style="left:239.06px;top:138.00px;font:normal 700 14.5px/1 'Liberation Sans', sans-serif;letter-spacing:1.969px;color:#222;">/</div>
<div class="t" style="left:261.56px;top:140.00px;font:normal 700 12.6px/1 'Liberation Sans', sans-serif;letter-spacing:0.000px;color:#e8fff4;transform:scaleX(0.9289);transform-origin:0 0;">Despesas Gerais</div>
<div class="t" style="left:368.62px;top:140.00px;font:normal 400 12px/1 'Liberation Sans', sans-serif;letter-spacing:0.000px;color:#222;transform:scaleX(1.0955);transform-origin:0 0;-webkit-text-stroke:0.25px #222;">- Link da página</div>
<div class="t" style="left:38.62px;top:169.00px;font:normal 700 18.2px/1 'Liberation Sans', sans-serif;letter-spacing:0.071px;color:#111;">Despesas Gerais - Exercício 2025</div>
<div class="t" style="left:38.62px;top:205.00px;font:normal 400 15.6px/1 'Liberation Sans', sans-serif;letter-spacing:0.057px;color:#2e2e2e;">Nesta seção são divulgadas informações sobre despesas usando agrupamentos ou a lista completa de despesas do(a) Prefeitura Municipal de Cururupu.</div>
<div class="t" style="left:38.62px;top:233.00px;font:normal 400 15.6px/1 'Liberation Sans', sans-serif;letter-spacing:0.111px;color:#111;-webkit-text-stroke:0.8px #111;">Data Inicial da Pesquisa</div>
<div class="t" style="left:228.56px;top:233.00px;font:normal 400 15.6px/1 'Liberation Sans', sans-serif;letter-spacing:-0.008px;color:#111;-webkit-text-stroke:0.8px #111;">Data Final da Pesquisa</div>
<div class="t" style="left:44.81px;top:258.00px;font:normal 400 11px/1 'DejaVu Sans', 'Liberation Sans', sans-serif;letter-spacing:0.017px;color:#222;-webkit-text-stroke:0.3px #222;">01/01/2025</div>
<div class="t" style="left:234.56px;top:258.00px;font:normal 400 11px/1 'DejaVu Sans', 'Liberation Sans', sans-serif;letter-spacing:0.017px;color:#222;-webkit-text-stroke:0.3px #222;">31/12/2025</div>
<div class="t" style="left:730.12px;top:285.00px;font:normal 700 16px/1 'Liberation Sans', sans-serif;letter-spacing:-0.002px;color:#111;">Mostrar Dados Consolidados considerando todas as entidades</div>
<div class="t" style="left:38.62px;top:317.00px;font:normal 400 15.6px/1 'Liberation Sans', sans-serif;letter-spacing:0.264px;color:#111;-webkit-text-stroke:0.8px #111;">Pesquisa por histórico de Empenho</div>
<div class="t" style="left:73.88px;top:382.00px;font:normal 700 12.4px/1 'Liberation Sans', sans-serif;letter-spacing:0.000px;color:#fff;transform:scaleX(1.0892);transform-origin:0 0;">Clique nos links na primeira coluna ou nas colunas de valores para maiores informações.</div>
<div class="t" style="left:1467.38px;top:379.00px;font:normal 700 15.2px/1 'Liberation Sans', sans-serif;letter-spacing:0.000px;color:#1a1a1a;transform:scaleX(0.9254);transform-origin:0 0;">Exportar dados para:</div>
<div class="t" style="left:1622.62px;top:377.00px;font:normal 700 17.5px/1 'Liberation Sans', sans-serif;letter-spacing:0.000px;color:#fff;transform:scaleX(1.0286);transform-origin:0 0;">PDF</div>
<div class="t" style="left:1670.25px;top:377.00px;font:normal 700 17.8px/1 'DejaVu Sans', 'Liberation Sans', sans-serif;letter-spacing:0.000px;color:#fff;transform:scaleX(1.0278);transform-origin:0 0;">CSV</div>
<div class="t" style="left:1726.12px;top:379.00px;font:normal 700 13.6px/1 'Liberation Sans', sans-serif;letter-spacing:0.000px;color:#e9f5dc;transform:scaleX(0.9645);transform-origin:0 0;">XLS</div>
<div class="t" style="left:1774.12px;top:379.00px;font:normal 700 13.6px/1 'Liberation Sans', sans-serif;letter-spacing:-0.289px;color:#fde2a4;">JPG</div>
<div class="t" style="left:1824.56px;top:379.00px;font:normal 700 13.6px/1 'Liberation Sans', sans-serif;letter-spacing:-0.375px;color:#dbe7ff;">TXT</div>
<div class="t" style="left:1392.75px;top:1035.00px;font:normal 700 12px/1 'Liberation Sans', sans-serif;letter-spacing:0.076px;color:#333;">901.313,60</div>
<div class="t" style="left:1511.62px;top:1035.00px;font:normal 700 12px/1 'Liberation Sans', sans-serif;letter-spacing:0.076px;color:#333;">875.212,56</div>
<div class="t" style="left:1632.19px;top:1035.00px;font:normal 700 12px/1 'Liberation Sans', sans-serif;letter-spacing:0.097px;color:#333;">859.748,06</div>
<div class="t" style="left:1781.44px;top:1035.00px;font:normal 700 12px/1 'Liberation Sans', sans-serif;letter-spacing:0.222px;color:#333;">901.313,60</div>
<div class="t" style="left:46.12px;top:1065.00px;font:normal 700 12px/1 'Liberation Sans', sans-serif;letter-spacing:-0.077px;color:#111;">Mostrando página 1 - Total de páginas - 2 - Total de linhas - 49 - Ordene os dados clicando no cabeçalho das colunas.</div>
</div></body></html>
